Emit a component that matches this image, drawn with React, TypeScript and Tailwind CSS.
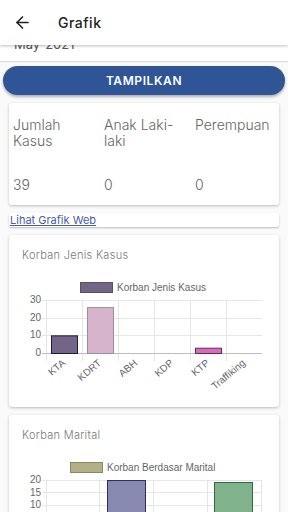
import { ArrowLeft } from "lucide-react";

const kasus = [
  { label: "KTA", value: 10, fill: "#746486", stroke: "#1e1b3c" },
  { label: "KDRT", value: 26, fill: "#d6b5cc", stroke: "#a08c9e" },
  { label: "ABH", value: 0, fill: "#999", stroke: "#666" },
  { label: "KDP", value: 0, fill: "#999", stroke: "#666" },
  { label: "KTP", value: 3, fill: "#d070b8", stroke: "#7a1f5e" },
  { label: "Traffiking", value: 0, fill: "#999", stroke: "#666" },
];

function KasusChart() {
  // svg x = page x - 9, y = page y - 272
  const base = 80;
  const perUnit = 53 / 30;
  return (
    <svg width="271" height="126" className="block" style={{ fontFamily: "'Liberation Sans', Arial, sans-serif" }}>
      <rect x="71.5" y="9.5" width="32" height="10" fill="#746486" stroke="#555" strokeWidth="1" />
      <text x="108" y="18" fontSize="10" fill="#666">Korban Jenis Kasus</text>
      {[27, 45, 62].map((y) => (
        <line key={y} x1="33" x2="253" y1={y + 0.5} y2={y + 0.5} stroke="#e6e6e6" />
      ))}
      {[37, 73, 109, 145, 181, 217].map((x) => (
        <line key={x} x1={x + 0.5} x2={x + 0.5} y1="27" y2="88" stroke="#e6e6e6" />
      ))}
      <line x1="33" x2="253" y1={base + 0.5} y2={base + 0.5} stroke="#bdbdbd" />
      {[
        ["30", 30],
        ["20", 48],
        ["10", 65],
        ["0", 83],
      ].map(([t, y]) => (
        <text key={t} x="32" y={y} fontSize="10" fill="#666" textAnchor="end">{t}</text>
      ))}
      {kasus.map((k, i) => {
        const x = 42 + 36 * i;
        const h = k.value * perUnit;
        const cx = 55 + 36 * i;
        return (
          <g key={k.label}>
            {k.value > 0 && (
              <rect x={x + 0.5} y={base - h + 0.5} width="26" height={h} fill={k.fill} stroke={k.stroke} />
            )}
            <text
              x={cx + 2}
              y="91"
              fontSize="10"
              fill="#666"
              textAnchor="end"
              transform={`rotate(-40 ${cx + 2} 91)`}
            >
              {k.label}
            </text>
          </g>
        );
      })}
    </svg>
  );
}

function MaritalChart() {
  // svg x = page x - 9, y = page y - 452
  return (
    <svg width="271" height="80" className="block" style={{ fontFamily: "'Liberation Sans', Arial, sans-serif" }}>
      <rect x="61.5" y="9.5" width="32" height="10" fill="#b3b088" stroke="#8a8766" />
      <text x="98" y="18" fontSize="10" fill="#666">Korban Berdasar Marital</text>
      {[27, 39, 52].map((y) => (
        <line key={y} x1="33" x2="253" y1={y + 0.5} y2={y + 0.5} stroke="#e6e6e6" />
      ))}
      {[37, 90, 144, 198, 252].map((x) => (
        <line key={x} x1={x + 0.5} x2={x + 0.5} y1="27" y2="80" stroke="#e6e6e6" />
      ))}
      {[
        ["20", 30],
        ["15", 43],
        ["10", 55],
      ].map(([t, y]) => (
        <text key={t} x="32" y={y} fontSize="10" fill="#666" textAnchor="end">{t}</text>
      ))}
      <rect x="98.5" y="27.5" width="38" height="60" fill="#8889b1" stroke="#2c2c6c" />
      <rect x="205.5" y="29.5" width="38" height="60" fill="#80b28b" stroke="#2f6b3c" />
    </svg>
  );
}

export default function App() {
  return (
    <div className="w-[288px] h-[512px] overflow-hidden bg-[#fafafa] font-['Inter',sans-serif] relative">
      <div className="relative z-10 h-[45px] bg-white flex items-center shadow-[0_1px_3px_rgba(0,0,0,0.25)]">
        <ArrowLeft className="ml-[13px] w-[19px] h-[19px] text-[#222]" strokeWidth={2} />
        <span className="ml-[26px] text-[14px] font-medium text-[#222] tracking-[0.5px]">Grafik</span>
      </div>

      <div className="h-[16px] overflow-hidden bg-white shadow-[0_1px_1px_rgba(0,0,0,0.12)]">
        <div className="-mt-[9px] ml-[14px] text-[13px] leading-[16px] text-[#555]">May-2021</div>
      </div>

      <div className="px-[3px] pt-[5px]">
        <button className="w-full h-[29px] rounded-full bg-[#2f5597] text-white text-[12px] font-semibold tracking-[0.6px] shadow-[0_2px_3px_rgba(0,0,0,0.3)]">
          TAMPILKAN
        </button>
      </div>

      <div className="mx-[9px] mt-[8px] flex flex-col gap-[8px]">
        <div className="h-[102px] bg-white rounded-[3px] shadow-[0_1px_3px_rgba(0,0,0,0.25)] pl-[4px] pt-[14px] text-[14px] font-light text-[#666] leading-[16px]">
          <div className="grid grid-cols-[91px_91px_85px]">
            <div>Jumlah<br />Kasus</div>
            <div>Anak Laki-<br />laki</div>
            <div>Perempuan</div>
          </div>
          <div className="grid grid-cols-[91px_91px_85px] mt-[28px]">
            <div>39</div>
            <div>0</div>
            <div>0</div>
          </div>
        </div>

        <div className="h-[14px] bg-white rounded-[2px] shadow-[0_1px_2px_rgba(0,0,0,0.25)] flex items-center">
          <a className="ml-[1px] text-[11px] leading-[14px] text-[#4a5ca6] underline">Lihat Grafik Web</a>
        </div>

        <div className="h-[172px] bg-white rounded-[3px] shadow-[0_1px_3px_rgba(0,0,0,0.25)] pt-[13px]">
          <div className="ml-[13px] text-[11px] leading-[14px] font-light text-[#777] tracking-[0.3px]">Korban Jenis Kasus</div>
          <div className="mt-[11px]">
            <KasusChart />
          </div>
        </div>

        <div className="h-[172px] bg-white rounded-[3px] shadow-[0_1px_3px_rgba(0,0,0,0.25)] pt-[13px]">
          <div className="ml-[13px] text-[11px] leading-[14px] font-light text-[#777] tracking-[0.3px]">Korban Marital</div>
          <div className="mt-[11px]">
            <MaritalChart />
          </div>
        </div>
      </div>
    </div>
  );
}
